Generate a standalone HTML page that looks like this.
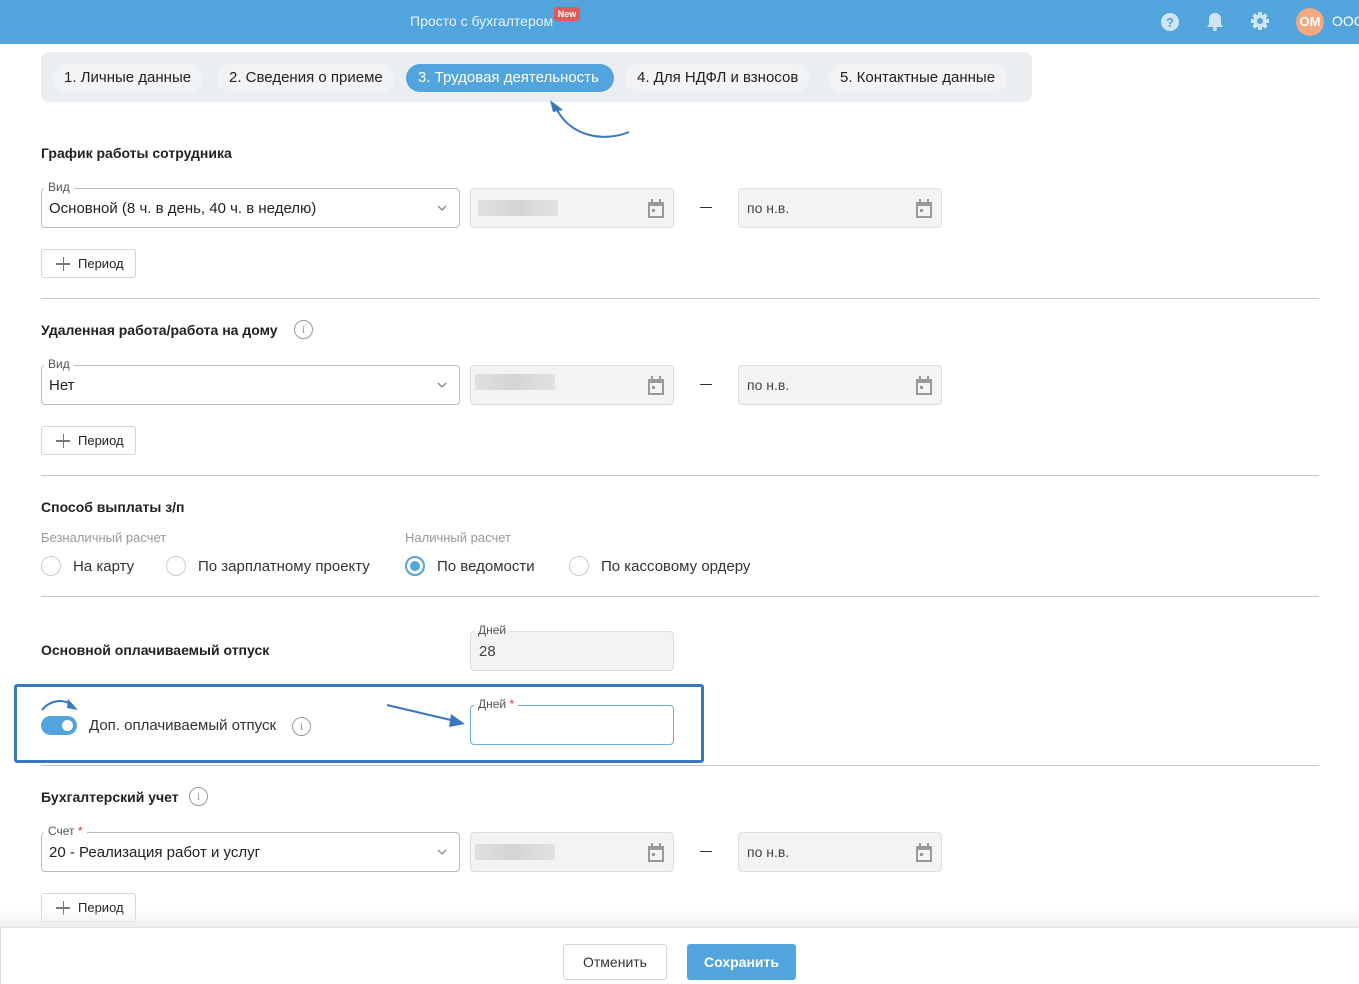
<!DOCTYPE html>
<html><head><meta charset="utf-8"><style>
*{box-sizing:border-box;margin:0;padding:0}
body{width:1359px;height:984px;overflow:hidden;background:#fff;font-family:"Liberation Sans",sans-serif;color:#222;position:relative}
.a{position:absolute;white-space:nowrap}
.hdr{left:0;top:0;width:1359px;height:44px;background:#52a5dc}
.tabs{left:41px;top:52px;width:991px;height:50px;background:#ebeef1;border-radius:8px}
.tab{top:63px;height:28px;line-height:28px;font-size:15px;padding:0 12px;border-radius:14px;background:#f2f3f4}
.h{font-size:14px;font-weight:bold;color:#222}
.sel{left:41px;width:419px;height:40px;border:1px solid #bdbdbd;border-radius:4px;font-size:15px;line-height:40px;padding-left:7px}
.chev{position:absolute;right:12px;top:16px}
.lbl{font-size:12px;color:#555;background:#fff;padding:0 4px;left:44px}
.dt{width:204px;height:40px;border:1px solid #ddd;border-radius:4px;background:#f3f3f3;font-size:14px;line-height:38px;padding-left:8px;color:#444}
.blur{position:absolute;left:7px;top:11px;width:80px;height:16px;background:linear-gradient(90deg,#e0e0e0,#d4d4d4 50%,#dadada 70%,#e2e2e2)}
.cal{position:absolute;right:8px;top:10px}
.pb{left:41px;width:95px;height:29px;border:1px solid #d6d6d6;border-radius:3px;font-size:13px;line-height:27px;padding-left:36px}
.pb:before{content:"";position:absolute;left:14px;top:13px;width:14px;height:1.5px;background:#777}
.pb:after{content:"";position:absolute;left:20.5px;top:6.5px;width:1.5px;height:14px;background:#777}
.hr{left:41px;width:1278px;height:1px;background:#c8c8c8}
.dash{left:700px;width:12px;height:1px;background:#333}
.rad{width:20px;height:20px;border:1px solid #ccc;border-radius:50%}
.rt{font-size:15px;color:#333}
.gl{font-size:13px;color:#999}
.info{width:19px;height:19px;border:1.5px solid #999;border-radius:50%;font-size:12px;color:#999;text-align:center;line-height:16px;font-family:"Liberation Serif",serif}
</style></head><body>
<div class="a hdr"></div>
<div class="a" style="left:410px;top:13px;font-size:14px;color:#e8f3fb">Просто с бухгалтером</div>
<div class="a" style="left:554px;top:7px;width:26px;height:14px;background:#e05a5a;border-radius:3px;color:#fff;font-size:9px;font-weight:bold;text-align:center;line-height:14px">New</div>
<svg class="a" style="left:1160px;top:12px" width="20" height="20"><circle cx="10" cy="10" r="9" fill="#cfe5f5"/><text x="10" y="15" font-size="13" font-weight="bold" text-anchor="middle" fill="#52a5dc" font-family="Liberation Sans">?</text></svg>
<svg class="a" style="left:1206px;top:12px" width="18" height="20"><path d="M9 1c-4 0-6 3-6 6v5l-2 3h16l-2-3V7c0-3-2-6-6-6z" fill="#cfe5f5"/><circle cx="9" cy="17" r="2" fill="#cfe5f5"/></svg>
<svg class="a" style="left:1250px;top:11px" width="20" height="20"><g fill="#cfe5f5"><circle cx="10" cy="10" r="6.5"/><rect x="8" y="1" width="4" height="18"/><rect x="1" y="8" width="18" height="4"/><rect x="8" y="1" width="4" height="18" transform="rotate(45 10 10)"/><rect x="8" y="1" width="4" height="18" transform="rotate(-45 10 10)"/></g><circle cx="10" cy="10" r="3" fill="#52a5dc"/></svg>
<div class="a" style="left:1296px;top:8px;width:28px;height:28px;border-radius:50%;background:#f2a982;color:#fff;font-size:13px;font-weight:bold;text-align:center;line-height:28px">OM</div>
<div class="a" style="left:1332px;top:13px;font-size:14px;color:#fff">ООО</div>

<div class="a tabs"></div>
<div class="a tab" style="left:52px;top:64px">1. Личные данные</div>
<div class="a tab" style="left:217px;top:64px">2. Сведения о приеме</div>
<div class="a tab" style="left:406px;top:64px;width:208px;background:#52a5dc;color:#fff">3. Трудовая деятельность</div>
<div class="a tab" style="left:625px;top:64px">4. Для НДФЛ и взносов</div>
<div class="a tab" style="left:828px;top:64px">5. Контактные данные</div>
<svg class="a" style="left:545px;top:98px" width="90" height="45"><path d="M84 34 C60 44 25 40 10 8" fill="none" stroke="#3a78bd" stroke-width="2"/><path d="M5 2 L18 12 L8 14 Z" fill="#3a78bd"/></svg>

<div class="a h" style="left:41px;top:145px">График работы сотрудника</div>
<div class="a sel" style="top:188px">Основной (8 ч. в день, 40 ч. в неделю)<svg class="chev" width="10" height="6"><path d="M1 1 L5 5 L9 1" fill="none" stroke="#888" stroke-width="1.3"/></svg></div>
<div class="a lbl" style="top:180px">Вид</div>
<div class="a dt" style="left:470px;top:188px"><div class="blur"></div><svg class="cal" width="18" height="20"><rect x="1" y="3" width="16" height="16" fill="#999"/><rect x="3" y="7" width="12" height="10" fill="#f3f3f3"/><rect x="4" y="0" width="2" height="4" fill="#999"/><rect x="12" y="0" width="2" height="4" fill="#999"/><rect x="5" y="10" width="3" height="3" fill="#999"/></svg></div>
<div class="a dash" style="top:207px"></div>
<div class="a dt" style="left:738px;top:188px">по н.в.<svg class="cal" width="18" height="20"><rect x="1" y="3" width="16" height="16" fill="#999"/><rect x="3" y="7" width="12" height="10" fill="#f3f3f3"/><rect x="4" y="0" width="2" height="4" fill="#999"/><rect x="12" y="0" width="2" height="4" fill="#999"/><rect x="5" y="10" width="3" height="3" fill="#999"/></svg></div>
<div class="a pb" style="top:249px">Период</div>
<div class="a hr" style="top:298px"></div>

<div class="a h" style="left:41px;top:322px">Удаленная работа/работа на дому</div>
<div class="a info" style="left:294px;top:320px">i</div>
<div class="a sel" style="top:365px">Нет<svg class="chev" width="10" height="6"><path d="M1 1 L5 5 L9 1" fill="none" stroke="#888" stroke-width="1.3"/></svg></div>
<div class="a lbl" style="top:357px">Вид</div>
<div class="a dt" style="left:470px;top:365px"><div class="blur" style="left:4px;top:8px"></div><svg class="cal" width="18" height="20"><rect x="1" y="3" width="16" height="16" fill="#999"/><rect x="3" y="7" width="12" height="10" fill="#f3f3f3"/><rect x="4" y="0" width="2" height="4" fill="#999"/><rect x="12" y="0" width="2" height="4" fill="#999"/><rect x="5" y="10" width="3" height="3" fill="#999"/></svg></div>
<div class="a dash" style="top:384px"></div>
<div class="a dt" style="left:738px;top:365px">по н.в.<svg class="cal" width="18" height="20"><rect x="1" y="3" width="16" height="16" fill="#999"/><rect x="3" y="7" width="12" height="10" fill="#f3f3f3"/><rect x="4" y="0" width="2" height="4" fill="#999"/><rect x="12" y="0" width="2" height="4" fill="#999"/><rect x="5" y="10" width="3" height="3" fill="#999"/></svg></div>
<div class="a pb" style="top:426px">Период</div>
<div class="a hr" style="top:475px"></div>

<div class="a h" style="left:41px;top:499px">Способ выплаты з/п</div>
<div class="a gl" style="left:41px;top:530px">Безналичный расчет</div>
<div class="a gl" style="left:405px;top:530px">Наличный расчет</div>
<div class="a rad" style="left:41px;top:556px"></div><div class="a rt" style="left:73px;top:558px">На карту</div>
<div class="a rad" style="left:166px;top:556px"></div><div class="a rt" style="left:198px;top:558px">По зарплатному проекту</div>
<div class="a rad" style="left:405px;top:556px;border:2px solid #52a5dc"><div style="position:absolute;left:3px;top:3px;width:10px;height:10px;border-radius:50%;background:#52a5dc"></div></div><div class="a rt" style="left:437px;top:558px">По ведомости</div>
<div class="a rad" style="left:569px;top:556px"></div><div class="a rt" style="left:601px;top:558px">По кассовому ордеру</div>
<div class="a hr" style="top:596px"></div>

<div class="a h" style="left:41px;top:642px">Основной оплачиваемый отпуск</div>
<div class="a dt" style="left:470px;top:631px;font-size:15px;padding-top:1px">28</div>
<div class="a lbl" style="left:474px;top:623px;background:linear-gradient(#fff 50%,#f3f3f3 50%)">Дней</div>

<div class="a" style="left:14px;top:684px;width:690px;height:79px;border:3px solid #3a78bd;border-radius:3px"></div>
<svg class="a" style="left:40px;top:696px" width="42" height="18"><path d="M2 14 C10 4 24 2 33 10" fill="none" stroke="#3a78bd" stroke-width="2"/><path d="M28 3 L38 14 L27 12 Z" fill="#3a78bd"/></svg>
<div class="a" style="left:41px;top:716px;width:36px;height:19px;border-radius:10px;background:#52a5dc"><div style="position:absolute;right:4px;top:4px;width:11px;height:11px;border-radius:50%;background:#fff"></div></div>
<div class="a rt" style="left:89px;top:717px">Доп. оплачиваемый отпуск</div>
<div class="a info" style="left:292px;top:717px">i</div>
<svg class="a" style="left:385px;top:700px" width="85" height="30"><path d="M2 5 L70 21" stroke="#3a78bd" stroke-width="2"/><path d="M80 24 L66 14 L64 27 Z" fill="#3a78bd"/></svg>
<div class="a" style="left:470px;top:705px;width:204px;height:40px;border:1px solid #6aaee0;border-radius:4px"></div>
<div class="a lbl" style="left:474px;top:697px">Дней <span style="color:#e03030">*</span></div>
<div class="a hr" style="top:765px"></div>

<div class="a h" style="left:41px;top:789px">Бухгалтерский учет</div>
<div class="a info" style="left:189px;top:787px">i</div>
<div class="a sel" style="top:832px">20 - Реализация работ и услуг<svg class="chev" width="10" height="6"><path d="M1 1 L5 5 L9 1" fill="none" stroke="#888" stroke-width="1.3"/></svg></div>
<div class="a lbl" style="top:824px">Счет <span style="color:#e03030">*</span></div>
<div class="a dt" style="left:470px;top:832px"><div class="blur" style="left:4px"></div><svg class="cal" width="18" height="20"><rect x="1" y="3" width="16" height="16" fill="#999"/><rect x="3" y="7" width="12" height="10" fill="#f3f3f3"/><rect x="4" y="0" width="2" height="4" fill="#999"/><rect x="12" y="0" width="2" height="4" fill="#999"/><rect x="5" y="10" width="3" height="3" fill="#999"/></svg></div>
<div class="a dash" style="top:851px"></div>
<div class="a dt" style="left:738px;top:832px">по н.в.<svg class="cal" width="18" height="20"><rect x="1" y="3" width="16" height="16" fill="#999"/><rect x="3" y="7" width="12" height="10" fill="#f3f3f3"/><rect x="4" y="0" width="2" height="4" fill="#999"/><rect x="12" y="0" width="2" height="4" fill="#999"/><rect x="5" y="10" width="3" height="3" fill="#999"/></svg></div>
<div class="a pb" style="top:893px">Период</div>

<div class="a" style="left:0;top:910px;width:1359px;height:18px;background:linear-gradient(rgba(255,255,255,0),#ececec)"></div>
<div class="a" style="left:0;top:927px;width:1359px;height:57px;background:#fff;border-left:1px solid #ddd;border-top:1px solid #e4e4e4"></div>
<div class="a" style="left:563px;top:944px;width:104px;height:36px;border:1px solid #d6d6d6;border-radius:3px;font-size:14px;text-align:center;line-height:34px;color:#333">Отменить</div>
<div class="a" style="left:687px;top:944px;width:109px;height:36px;background:#52a5dc;border-radius:3px;font-size:14px;font-weight:bold;text-align:center;line-height:36px;color:#fff">Сохранить</div>
</body></html>
